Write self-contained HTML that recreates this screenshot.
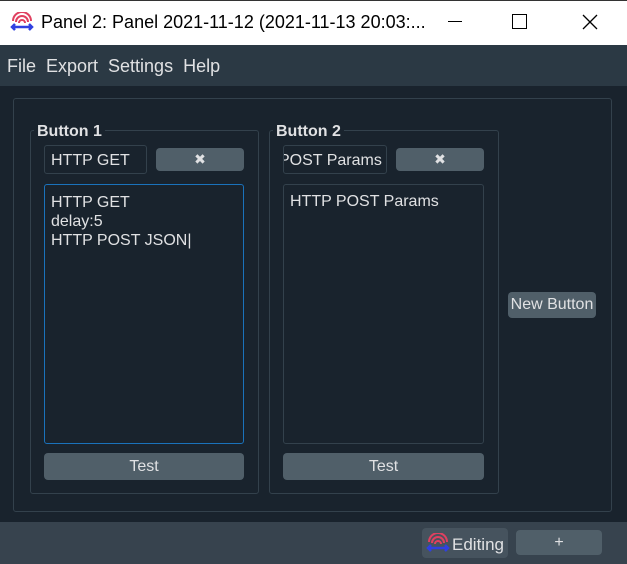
<!DOCTYPE html><html><head><style>
*{margin:0;padding:0;box-sizing:border-box}
body{width:627px;height:564px;overflow:hidden;background:#19232d;font-family:"Liberation Sans",sans-serif;color:#e0e1e3;position:relative;font-size:16px}
.a{position:absolute}
.btn{position:absolute;background:#505f69;border-radius:4px;color:#e0e1e3;text-align:center}
.box{position:absolute;border:1px solid #33414c;border-radius:3px}
</style></head><body>
<div class="a" style="left:0;top:0;width:627px;height:45px;background:#fff;border-top:1px solid #333"></div>
<svg class="a" style="left:10px;top:12px" width="24" height="20" viewBox="0 0 24 20"><path d="M3 9a9 9 0 0 1 18 0M6 10a6 6 0 0 1 12 0M9 11a3 3 0 0 1 6 0" stroke="#e04060" stroke-width="2" fill="none"/><path d="M2 15h20M5 12l-3 3 3 3M19 12l3 3-3 3" stroke="#3040e0" stroke-width="2.5" fill="none"/></svg>
<div class="a" style="left:41px;top:12px;font-size:18px;color:#000">Panel 2: Panel 2021-11-12 (2021-11-13 20:03:...</div>
<div class="a" style="left:448px;top:21px;width:14px;height:1px;background:#000"></div>
<div class="a" style="left:512px;top:14px;width:15px;height:15px;border:1.5px solid #000"></div>
<svg class="a" style="left:582px;top:14px" width="16" height="16"><path d="M1 1L15 15M15 1L1 15" stroke="#000" stroke-width="1.3"/></svg>
<div class="a" style="left:0;top:45px;width:627px;height:41px;background:#2b3944"></div>
<div class="a" style="left:7px;top:56px;font-size:18px">File&nbsp; Export&nbsp; Settings&nbsp; Help</div>
<div class="box" style="left:13px;top:98px;width:599px;height:414px"></div>
<div class="box" style="left:30px;top:130px;width:229px;height:364px"></div>
<div class="a" style="left:34px;top:123px;background:#19232d;padding:0 3px;font-weight:bold">Button 1</div>
<div class="box" style="left:44px;top:145px;width:103px;height:29px;padding:6px 6px;color:#e0e1e3">HTTP GET</div>
<div class="btn" style="left:156px;top:148px;width:88px;height:23px;font-size:14px;line-height:23px">✖</div>
<div class="box" style="left:44px;top:184px;width:200px;height:260px;border-color:#1a72bb;padding:8px 6px;line-height:19px">HTTP GET<br>delay:5<br>HTTP POST JSON|</div>
<div class="btn" style="left:44px;top:453px;width:200px;height:27px;line-height:27px">Test</div>
<div class="box" style="left:269px;top:130px;width:230px;height:364px"></div>
<div class="a" style="left:273px;top:123px;background:#19232d;padding:0 3px;font-weight:bold">Button 2</div>
<div class="box" style="left:283px;top:145px;width:104px;height:29px;padding:6px 0;overflow:hidden;white-space:nowrap"><span style="margin-left:-5px">POST Params</span></div>
<div class="btn" style="left:396px;top:148px;width:88px;height:23px;font-size:14px;line-height:23px">✖</div>
<div class="box" style="left:283px;top:184px;width:201px;height:260px;padding:8px 6px">HTTP POST Params</div>
<div class="btn" style="left:283px;top:453px;width:201px;height:27px;line-height:27px">Test</div>
<div class="btn" style="left:508px;top:292px;width:88px;height:26px;line-height:26px">New Button</div>
<div class="a" style="left:0;top:522px;width:627px;height:42px;background:#37434e"></div>
<div class="btn" style="left:422px;top:528px;width:86px;height:30px;background:#46535e"></div>
<svg class="a" style="left:426px;top:533px" width="24" height="20" viewBox="0 0 24 20"><path d="M3 9a9 9 0 0 1 18 0M6 10a6 6 0 0 1 12 0M9 11a3 3 0 0 1 6 0" stroke="#e04060" stroke-width="2" fill="none"/><path d="M2 15h20M5 12l-3 3 3 3M19 12l3 3-3 3" stroke="#3040e0" stroke-width="2.5" fill="none"/></svg>
<div class="a" style="left:452px;top:535px;font-size:17px">Editing</div>
<div class="btn" style="left:516px;top:530px;width:86px;height:25px;line-height:25px;background:#505f69">+</div>
</body></html>
